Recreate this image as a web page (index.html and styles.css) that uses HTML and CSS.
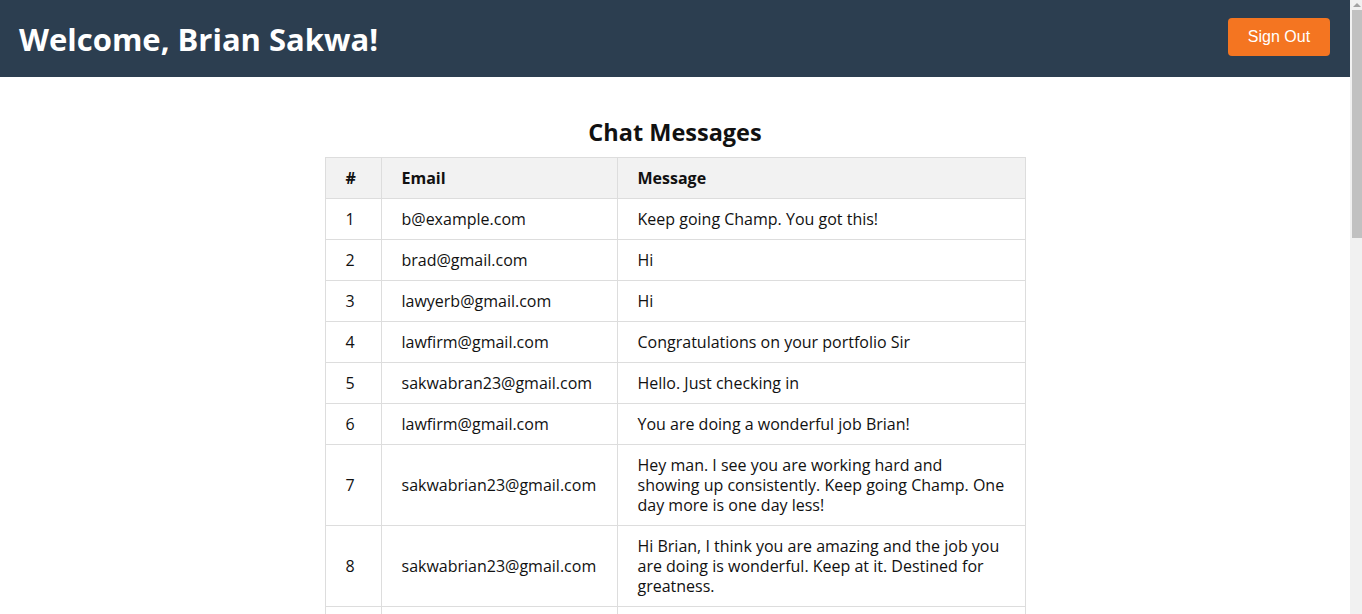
FILE: index.html
```html
<!DOCTYPE html>
<html lang="en">
<head>
<meta charset="utf-8">
<title>Dashboard</title>
<link rel="stylesheet" href="styles.css">
</head>
<body>
<div class="page">
<header class="topbar">
  <h1 class="welcome">Welcome, Brian Sakwa!</h1>
  <button class="signout">Sign Out</button>
</header>
<main class="content">
  <h2 class="title">Chat Messages</h2>
  <table class="messages">
    <colgroup><col class="c-num"><col class="c-email"><col class="c-msg"></colgroup>
    <thead>
      <tr><th>#</th><th>Email</th><th>Message</th></tr>
    </thead>
    <tbody>
      <tr><td>1</td><td>b@example.com</td><td>Keep going Champ. You got this!</td></tr>
      <tr><td>2</td><td>brad@gmail.com</td><td>Hi</td></tr>
      <tr><td>3</td><td>lawyerb@gmail.com</td><td>Hi</td></tr>
      <tr><td>4</td><td>lawfirm@gmail.com</td><td>Congratulations on your portfolio Sir</td></tr>
      <tr><td>5</td><td>sakwabran23@gmail.com</td><td>Hello. Just checking in</td></tr>
      <tr><td>6</td><td>lawfirm@gmail.com</td><td>You are doing a wonderful job Brian!</td></tr>
      <tr><td>7</td><td>sakwabrian23@gmail.com</td><td>Hey man. I see you are working hard and showing up consistently. Keep going Champ. One day more is one day less!</td></tr>
      <tr><td>8</td><td>sakwabrian23@gmail.com</td><td>Hi Brian, I think you are amazing and the job you are doing is wonderful. Keep at it. Destined for greatness.</td></tr>
      <tr><td>9</td><td>b@example.com</td><td>Hi</td></tr>
      <tr><td>10</td><td>brad@gmail.com</td><td>Hello</td></tr>
      <tr><td>11</td><td>lawfirm@gmail.com</td><td>Hi</td></tr>
      <tr><td>12</td><td>sakwabrian23@gmail.com</td><td>Hello</td></tr>
      <tr><td>13</td><td>b@example.com</td><td>Hi</td></tr>
      <tr><td>14</td><td>brad@gmail.com</td><td>Hi</td></tr>
      <tr><td>15</td><td>lawyerb@gmail.com</td><td>Hello</td></tr>
      <tr><td>16</td><td>lawfirm@gmail.com</td><td>Hi</td></tr>
      <tr><td>17</td><td>sakwabrian23@gmail.com</td><td>Hi</td></tr>
      <tr><td>18</td><td>b@example.com</td><td>Hello</td></tr>
      <tr><td>19</td><td>brad@gmail.com</td><td>Hi</td></tr>
      <tr><td>20</td><td>lawyerb@gmail.com</td><td>Hi</td></tr>
      <tr><td>21</td><td>lawfirm@gmail.com</td><td>Hello</td></tr>
      <tr><td>22</td><td>sakwabrian23@gmail.com</td><td>Hi</td></tr>
      <tr><td>23</td><td>b@example.com</td><td>Hi</td></tr>
      <tr><td>24</td><td>brad@gmail.com</td><td>Hello</td></tr>
    </tbody>
  </table>
</main>
</div>
<div class="scrollbar" aria-hidden="true">
  <div class="sb-arrow"></div>
  <div class="sb-thumb"></div>
</div>
</body>
</html>
```
FILE: styles.css
```css
body {
  margin: 0;
  font-family: "Open Sans", "Noto Sans", sans-serif;
  color: #111;
  background: #fff;
}

.page {
  margin-right: 12px;
}

.scrollbar {
  position: fixed;
  top: 0;
  right: 0;
  width: 12px;
  height: 100vh;
  background: #f1f1f1;
  display: flex;
  flex-direction: column;
  align-items: flex-end;
}

.sb-arrow {
  width: 0;
  height: 0;
  margin: 3px 1px 3px 0;
  border-left: 4px solid transparent;
  border-right: 4px solid transparent;
  border-bottom: 4px solid #a3a3a3;
}

.sb-thumb {
  width: 10px;
  height: 228px;
  background: #c1c1c1;
}

.topbar {
  background: #2c3e50;
  height: 77px;
  display: flex;
  align-items: center;
  justify-content: space-between;
  padding: 0 20px 0 19px;
  box-sizing: border-box;
}

.welcome {
  margin: 0;
  color: #fff;
  font-size: 31px;
  font-weight: 700;
}

.signout {
  background: #f47521;
  color: #fff;
  border: none;
  border-radius: 4px;
  font-family: "Liberation Sans", Arial, sans-serif;
  font-size: 16px;
  width: 102px;
  height: 38px;
  padding: 0;
  margin-top: -3px;
}

.content {
  padding: 40px 0 40px;
}

.title {
  text-align: center;
  margin: 0 0 10px;
  font-size: 23.5px;
  line-height: 30px;
  font-weight: 700;
}

.messages {
  width: 700px;
  margin: 0 auto;
  border-collapse: collapse;
  table-layout: fixed;
  font-size: 16px;
  line-height: 20px;
}

.c-num { width: 56px; }
.c-email { width: 236px; }
.c-msg { width: 408px; }

.messages th,
.messages td {
  border: 1px solid #ddd;
  padding: 10px 20px;
  text-align: left;
  vertical-align: middle;
}

.messages th {
  background: #f2f2f2;
  font-weight: 700;
}
```
